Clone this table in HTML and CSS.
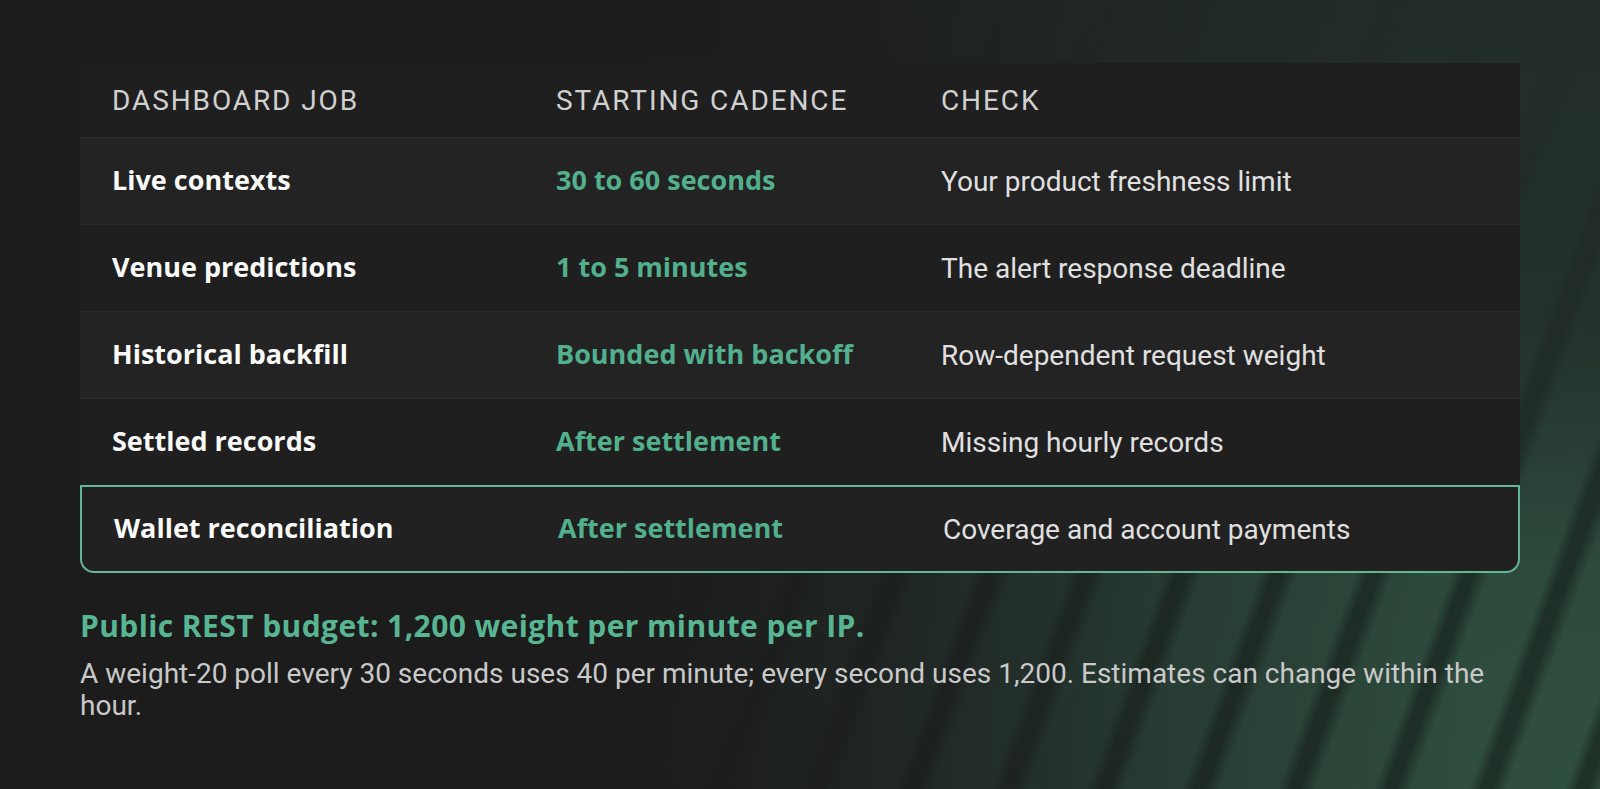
FILE: index.html
```html
<!DOCTYPE html>
<html lang="en">
<head>
<meta charset="utf-8">
<title>Dashboard polling cadence</title>
<link rel="stylesheet" href="styles.css">
</head>
<body>
<main class="page">
  <section class="table" role="table">
    <div class="row head" role="row">
      <div class="cell" role="columnheader">Dashboard job</div>
      <div class="cell" role="columnheader">Starting cadence</div>
      <div class="cell" role="columnheader">Check</div>
    </div>
    <div class="row odd" role="row">
      <div class="cell job">Live contexts</div>
      <div class="cell cadence">30 to 60 seconds</div>
      <div class="cell check">Your product freshness limit</div>
    </div>
    <div class="row even" role="row">
      <div class="cell job">Venue predictions</div>
      <div class="cell cadence">1 to 5 minutes</div>
      <div class="cell check">The alert response deadline</div>
    </div>
    <div class="row odd" role="row">
      <div class="cell job">Historical backfill</div>
      <div class="cell cadence">Bounded with backoff</div>
      <div class="cell check">Row-dependent request weight</div>
    </div>
    <div class="row even" role="row">
      <div class="cell job">Settled records</div>
      <div class="cell cadence">After settlement</div>
      <div class="cell check">Missing hourly records</div>
    </div>
    <div class="row highlight" role="row">
      <div class="cell job">Wallet reconciliation</div>
      <div class="cell cadence">After settlement</div>
      <div class="cell check">Coverage and account payments</div>
    </div>
  </section>
  <h2 class="budget">Public REST budget: 1,200 weight per minute per IP.</h2>
  <p class="note">A weight-20 poll every 30 seconds uses 40 per minute; every second uses 1,200. Estimates can change within the hour.</p>
</main>
</body>
</html>
```
FILE: styles.css
```css
* { box-sizing: border-box; }

html, body { height: 100%; }

body {
  margin: 0;
  min-height: 789px;
  color: #dcdcdc;
  font-family: Roboto, "Liberation Sans", sans-serif;
  background-color: #1c1c1c;
  background-image:
    linear-gradient(to right, #1c1c1c 0%, #1c1c1c 38%, rgba(28,28,28,0.75) 54%, rgba(28,28,28,0.25) 74%, rgba(28,28,28,0) 92%),
    linear-gradient(to bottom, rgba(34,44,40,0.92) 0%, rgba(34,44,40,0.75) 40%, rgba(34,44,40,0) 72%),
    repeating-linear-gradient(110deg, rgba(18,24,21,0) 0px, rgba(18,24,21,0) 30px, rgba(18,24,21,0.55) 42px, rgba(18,24,21,0.55) 52px, rgba(18,24,21,0) 66px, rgba(18,24,21,0) 90px),
    radial-gradient(ellipse 1200px 950px at 100% 100%, #30503f 0%, #2b473b 40%, #263b34 70%, #222b28 100%);
}

.page {
  padding: 63px 80px 0 80px;
}

.table {
  width: 1440px;
  display: flex;
  flex-direction: column;
}

.row {
  display: grid;
  grid-template-columns: 444px 385px 1fr;
  align-items: center;
  height: 87px;
  border-top: 1px solid #2b2b2b;
}

.row.head {
  height: 74px;
  border-top: none;
  background: #1f1f1f;
}

.row.odd { background: #232323; }
.row.even { background: #1f1f1f; }

.row.highlight {
  height: 88px;
  background: #212121;
  border: 2px solid #65b698;
  border-radius: 0 0 14px 14px;
}

.cell {
  padding: 0 32px;
  white-space: nowrap;
}

.head .cell {
  font-family: Roboto, "Liberation Sans", sans-serif;
  font-weight: 400;
  font-size: 28px;
  letter-spacing: 1.9px;
  text-transform: uppercase;
  color: #d0d0d0;
}

.job,
.cadence {
  font-family: "Open Sans", "Noto Sans", sans-serif;
  font-weight: 700;
  font-size: 27px;
  padding-bottom: 4px;
}

.job { color: #fbfbfb; }
.cadence { color: #52b08d; }

.check {
  font-family: Roboto, "Liberation Sans", sans-serif;
  font-size: 28px;
  color: #e0e0e0;
}

.budget {
  margin: 34px 0 13px;
  font-family: "Open Sans", "Noto Sans", sans-serif;
  font-weight: 700;
  font-size: 30px;
  letter-spacing: 0.4px;
  line-height: 38px;
  color: #58b592;
}

.note {
  margin: 0;
  width: 1440px;
  font-family: Roboto, "Liberation Sans", sans-serif;
  font-size: 28px;
  line-height: 32px;
  color: #c9c9c9;
}
```
